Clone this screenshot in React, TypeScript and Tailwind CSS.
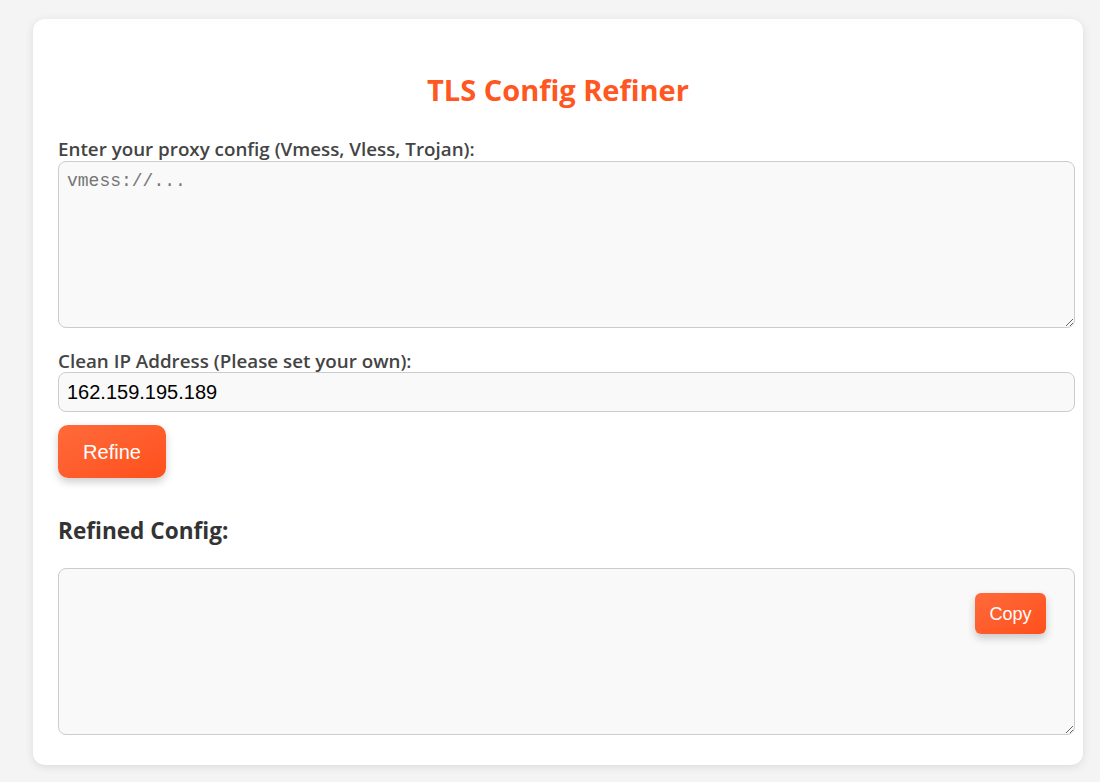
import React, { useState } from "react";

export default function App() {
  const [ip, setIp] = useState("162.159.195.189");
  const [config, setConfig] = useState("");
  const [output] = useState("");

  return (
    <div className="min-h-[782px] bg-[#f4f4f4] pt-[19px] pb-4 px-[33px] font-['Open_Sans',sans-serif]">
      <div className="w-[1050px] bg-white rounded-xl shadow-[0_2px_10px_rgba(0,0,0,0.1)] px-[25px] pt-[29px] pb-[30px]">
        <h1 className="mt-[25px] mb-[32px] text-center text-[29px] leading-[34px] font-bold text-[#ff5722]">
          TLS Config Refiner
        </h1>

        <label className="block text-[18.8px] leading-[20px] font-semibold text-[#444] mb-[2px]">
          Enter your proxy config (Vmess, Vless, Trojan):
        </label>
        <textarea
          value={config}
          onChange={(e) => setConfig(e.target.value)}
          placeholder="vmess://..."
          className="block w-[1017px] h-[167px] p-2 bg-[#f9f9f9] border border-[#ccc] rounded-lg font-['Liberation_Mono',monospace] text-lg leading-[22px] text-[#333] placeholder:text-[#757575] outline-none"
        />

        <label className="block text-[18.8px] leading-[20px] font-semibold text-[#444] mt-[23px] mb-[1px]">
          Clean IP Address (Please set your own):
        </label>
        <input
          value={ip}
          onChange={(e) => setIp(e.target.value)}
          className="block w-[1017px] h-[40px] px-2 bg-[#f9f9f9] border border-[#ccc] rounded-lg font-['Liberation_Sans',Arial,sans-serif] text-[20px] text-black outline-none"
        />

        <button className="mt-[13px] w-[108px] h-[53px] rounded-[10px] bg-gradient-to-br from-[#ff6a3a] to-[#ff4f1a] text-white text-[20px] font-['Liberation_Sans',Arial,sans-serif] shadow-[0_4px_8px_rgba(0,0,0,0.2)]">
          Refine
        </button>

        <h3 className="mt-[41px] mb-[25px] text-[22.6px] leading-[24px] font-bold text-[#333]">
          Refined Config:
        </h3>
        <div className="relative">
          <textarea
            value={output}
            readOnly
            className="block w-[1017px] h-[167px] p-2 bg-[#f9f9f9] border border-[#ccc] rounded-lg font-['Liberation_Mono',monospace] text-lg text-[#333] outline-none"
          />
          <button className="absolute top-[25px] left-[917px] w-[71px] h-[41px] rounded-md bg-gradient-to-br from-[#ff6a3a] to-[#ff4f1a] text-white text-lg font-['Liberation_Sans',Arial,sans-serif] shadow-[0_4px_8px_rgba(0,0,0,0.2)]">
            Copy
          </button>
        </div>
      </div>
    </div>
  );
}
